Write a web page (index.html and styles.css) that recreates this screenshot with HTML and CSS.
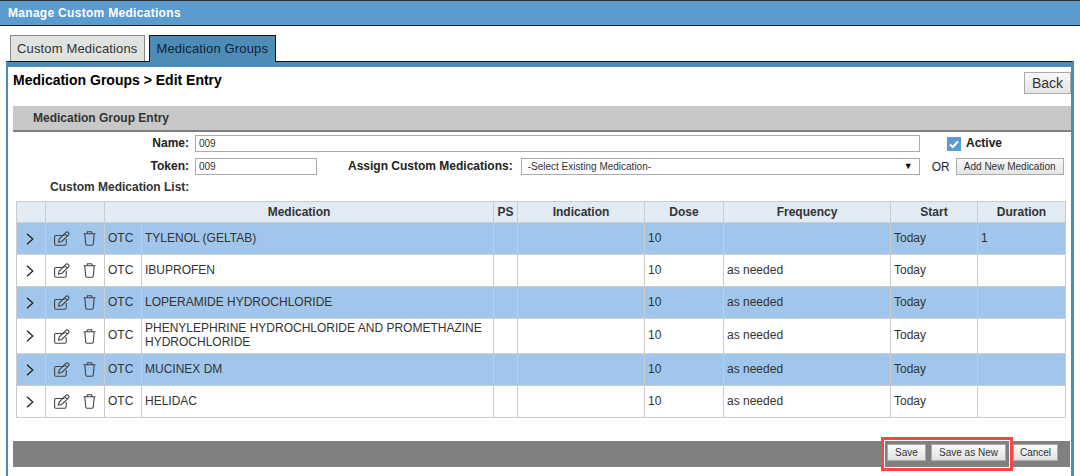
FILE: index.html
```html
<!DOCTYPE html>
<html lang="en">
<head>
  <meta charset="UTF-8" />
  <title>Manage Custom Medications</title>
  <link rel="stylesheet" href="styles.css">
</head>
<body>

  <svg class="icon-defs" width="0" height="0">
    <symbol id="i-arrow" viewBox="0 0 8 12"><path d="M1 .7 L6.800 6 L1 11.300" fill="none" stroke="#222" stroke-width="1.300"/></symbol>
    <symbol id="i-edit" viewBox="0 0 16 15"><path d="M10.500 4.500 H1.800 Q.6 4.500 .6 5.700 V12.800 Q.6 14.300 1.800 14.300 H10.800 Q12.200 14.300 12.200 12.800 V8" fill="none" stroke="#444" stroke-width="1.100"/><path d="M4.500 11 L5.200 8 L11.800 1.300 Q13 .3 14.300 1.400 Q15.600 2.700 14.500 3.900 L7.800 10.500 Z M10.700 2.600 L13.300 5.100" fill="none" stroke="#444" stroke-width="1.100"/></symbol>
    <symbol id="i-trash" viewBox="0 0 13 15"><path d="M.5 2.800 H12.500 M3.800 2.800 L4.400 .7 H8.600 L9.200 2.800 M1.800 2.800 L2.700 13 Q2.800 14.300 4 14.300 H9 Q10.200 14.300 10.300 13 L11.200 2.800" fill="none" stroke="#444" stroke-width="1.100"/></symbol>
  </svg>

  <div class="title-bar">Manage Custom Medications</div>

  <div class="tabs">
    <div class="tab">Custom Medications</div>
    <div class="tab tab-active">Medication Groups</div>
  </div>

  <div class="panel">
    <div class="panel-head">
      <h1>Medication Groups &gt; Edit Entry</h1>
      <button class="back-btn">Back</button>
    </div>

    <div class="section-bar">Medication Group Entry</div>

    <div class="form-row name-row">
      <label class="name-label">Name:</label>
      <div class="input name-input">009</div>
      <span class="check"><svg width="14" height="14" viewBox="0 0 14 14"><path d="M3 7.500 L5.800 10 L11 4.500" fill="none" stroke="#fff" stroke-width="2"/></svg></span>
      <label>Active</label>
    </div>

    <div class="form-row token-row">
      <label class="name-label">Token:</label>
      <div class="input token-input">009</div>
      <label class="assign-label">Assign Custom Medications:</label>
      <div class="input select-input">-Select Existing Medication-<span class="caret">▼</span></div>
      <span class="or">OR</span>
      <button class="btn add-btn">Add New Medication</button>
    </div>

    <div class="list-label">Custom Medication List:</div>

    <table class="med-table">
      <colgroup>
        <col class="c1"><col class="c2"><col class="c3"><col class="c4"><col class="c5"><col class="c6"><col class="c7"><col class="c8"><col class="c9"><col class="c10">
      </colgroup>
      <thead>
        <tr><th></th><th></th><th colspan="2">Medication</th><th>PS</th><th>Indication</th><th>Dose</th><th>Frequency</th><th>Start</th><th>Duration</th></tr>
      </thead>
      <tbody id="medRows"></tbody>
    </table>

    <div class="action-bar">
      <div class="highlight"></div>
      <button class="btn">Save</button>
      <button class="btn save-new">Save as New</button>
      <button class="btn cancel">Cancel</button>
    </div>
  </div>

  <script>
    const meds = [
      ["TYLENOL (GELTAB)", "", "1"],
      ["IBUPROFEN", "as needed", ""],
      ["LOPERAMIDE HYDROCHLORIDE", "as needed", ""],
      ["PHENYLEPHRINE HYDROCHLORIDE AND PROMETHAZINE HYDROCHLORIDE", "as needed", ""],
      ["MUCINEX DM", "as needed", ""],
      ["HELIDAC", "as needed", ""]
    ];

    const rows = document.getElementById("medRows");
    meds.forEach((m, i) => {
      const tr = document.createElement("tr");
      if (i % 2 === 0) tr.className = "alt";
      if (m[0].length > 50) tr.classList.add("tall");
      tr.innerHTML = `
        <td class="arrow-cell"><svg width="8" height="12"><use href="#i-arrow"/></svg></td>
        <td class="icons-cell"><svg width="16" height="15"><use href="#i-edit"/></svg><svg width="13" height="15"><use href="#i-trash"/></svg></td>
        <td>OTC</td>
        <td>${m[0]}</td>
        <td></td>
        <td></td>
        <td>10</td>
        <td>${m[1]}</td>
        <td>Today</td>
        <td>${m[2]}</td>
      `;
      rows.appendChild(tr);
    });
  </script>

</body>
</html>
```

FILE: styles.css
```css
html, body {
  height: 476px;
  overflow: hidden;
}

body {
  font-family: "Liberation Sans", Arial, sans-serif;
  font-size: 12px;
  color: #222;
  background-color: #fff;
  margin: 0;
}

.icon-defs {
  position: absolute;
}

.title-bar {
  height: 24px;
  line-height: 24px;
  padding-left: 8px;
  background-color: #5b9bd0;
  border-top: 1px solid #333;
  border-bottom: 1px solid #222;
  color: #fff;
  font-size: 12px;
  font-weight: bold;
  letter-spacing: 0.3px;
}

.tabs {
  display: flex;
  gap: 4px;
  padding: 9px 0 0 10px;
}

.tab {
  height: 25px;
  line-height: 25px;
  padding: 0 7px 0 6px;
  border: 1px solid #888;
  border-bottom: none;
  background-color: #e0e4e0;
  font-size: 13px;
  letter-spacing: 0.15px;
  color: #333;
}

.tab-active {
  position: relative;
  height: 26px;
  margin-bottom: -1px;
  background-color: #4e8cb8;
  border-color: #111;
  color: #123;
}

.panel {
  margin-left: 6px;
  width: 1058px;
  height: 420px;
  padding: 0 0 0 5px;
  border-top: 1px solid #111;
  border-left: 2px solid #4e8cb8;
  border-right: 3px solid #4e8cb8;
  box-shadow: inset 0 5px 0 #4e8cb8;
}

.panel-head {
  display: flex;
  justify-content: space-between;
  align-items: flex-start;
  height: 44px;
  padding-top: 5px;
  box-sizing: border-box;
}

.panel-head h1 {
  margin: 5px 0 0 0;
  font-size: 14px;
  line-height: 16px;
  color: #000;
}

.back-btn {
  width: 47px;
  height: 22px;
  margin-top: 5px;
  padding: 0;
  font-family: inherit;
  font-size: 14px;
  color: #333;
  border: 1px solid #aaa;
  background: linear-gradient(#f8f8f8, #e4e4e4);
}

.section-bar {
  width: 1038px;
  height: 24px;
  line-height: 25px;
  padding-left: 20px;
  background-color: #c8c8c8;
  border-bottom: 2px solid #808080;
  font-weight: bold;
  color: #333;
}

.form-row {
  display: flex;
  align-items: center;
  height: 17px;
  font-weight: bold;
}

.form-row label {
  margin-bottom: 2px;
}

.name-row {
  margin-top: 3px;
}

.token-row {
  margin-top: 6px;
}

.name-label {
  width: 176px;
  text-align: right;
  margin-right: 6px;
}

.input {
  height: 15px;
  line-height: 15px;
  padding-left: 3px;
  border: 1px solid #aaa;
  font-weight: normal;
  font-size: 10px;
  color: #333;
}

.name-input {
  width: 720px;
  margin-right: 27px;
}

.check {
  display: flex;
  width: 14px;
  height: 14px;
  margin-right: 5px;
  background-color: #5b9bd0;
}

.token-input {
  width: 117px;
}

.assign-label {
  margin-left: 31px;
  margin-right: 8px;
}

.select-input {
  position: relative;
  width: 391px;
  padding-left: 6px;
}

.caret {
  position: absolute;
  right: 6px;
  top: 0;
  font-size: 9px;
  color: #111;
}

.or {
  margin-left: 12px;
  font-weight: normal;
}

.btn {
  height: 17px;
  padding: 0 6px;
  font-family: inherit;
  font-size: 10px;
  color: #333;
  border: 1px solid #aaa;
  background: linear-gradient(#f8f8f8, #e4e4e4);
}

.add-btn {
  width: 108px;
  margin-left: 6px;
  padding: 0;
}

.list-label {
  margin: 5px 0 0 37px;
  height: 14px;
  line-height: 14px;
  font-weight: bold;
  color: #333;
}

.med-table {
  width: 1050px;
  margin: 7px 0 0 3px;
  border-collapse: collapse;
  table-layout: fixed;
  font-size: 12px;
}

.med-table th, .med-table td {
  border: 1px solid #ccc;
  padding: 0 3px;
  color: #333;
}

.med-table th {
  height: 20px;
  background-color: #e2eaf4;
  text-align: center;
}

.med-table td {
  height: 29px;
  padding-bottom: 2px;
  line-height: 14px;
}

.med-table .tall td {
  height: 32px;
}

.med-table .alt td {
  background-color: #a0c6ec;
}

.c1 { width: 29px; }
.c2 { width: 59px; }
.c3 { width: 37px; }
.c4 { width: 352px; }
.c5 { width: 24px; }
.c6 { width: 127px; }
.c7 { width: 79px; }
.c8 { width: 167px; }
.c9 { width: 87px; }
.c10 { width: 88px; }

.med-table .arrow-cell {
  padding: 0 0 0 9px;
}

.med-table .icons-cell {
  padding-bottom: 0;
}

.arrow-cell svg {
  display: block;
}

.icons-cell svg {
  vertical-align: middle;
  margin-left: 5px;
}

.icons-cell svg + svg {
  margin-left: 13px;
}

.action-bar {
  position: relative;
  display: flex;
  justify-content: flex-end;
  align-items: flex-start;
  gap: 5px;
  width: 1045px;
  height: 23px;
  margin-top: 23px;
  padding: 3px 12px 0 0;
  background-color: #808080;
}

.action-bar .btn {
  height: 17px;
  padding: 0;
  width: 39px;
  background: linear-gradient(#fafafa, #e2e2e2);
}

.action-bar .save-new {
  width: 75px;
}

.action-bar .cancel {
  width: 45px;
  margin-left: 2px;
}

/* red box round the two save buttons */
.highlight {
  position: absolute;
  left: 868px;
  top: -4px;
  width: 126px;
  height: 28px;
  border: 3px solid #f44;
  box-shadow: inset 0 0 0 1px #fff;
}
```
